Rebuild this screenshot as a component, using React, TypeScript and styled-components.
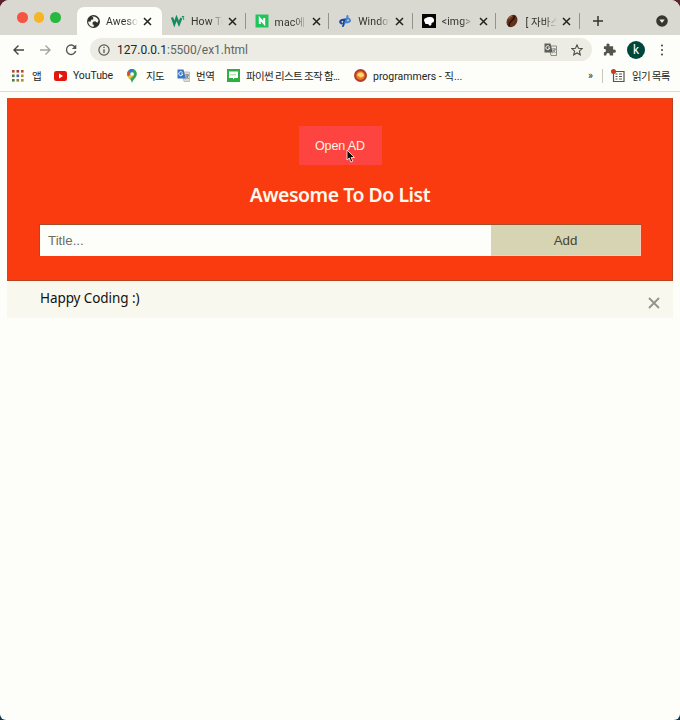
import React from 'react';
import styled, { createGlobalStyle } from 'styled-components';

const Global = createGlobalStyle`
  * { box-sizing: border-box; }
  html, body { margin: 0; background: #4b1728; }
  html { background: linear-gradient(#5b2230 0 50%, #0d3550 50%); height: 720px; }
  body { background: transparent; font-family: Roboto, "Noto Sans CJK KR", sans-serif; overflow: hidden; }
  button, input { font: inherit; border: 0; padding: 0; margin: 0; background: none; }
`;

const Window = styled.div`
  width: 680px; height: 720px; background: #fdfdf9; overflow: hidden;
  border-radius: 9px 9px 6px 6px; display: flex; flex-direction: column;
`;

const TabStrip = styled.div`
  height: 35px; background: #d9d9d1; display: flex; align-items: flex-end; flex: none;
`;
const Lights = styled.div`
  width: 77px; height: 35px; padding-left: 17px; display: flex; gap: 6px; align-items: center;
`;
const Light = styled.i<{ $color: string }>`
  width: 10.5px; height: 10.5px; border-radius: 50%; background: ${p => p.$color};
`;
const Tab = styled.div<{ $active?: boolean }>`
  width: ${p => (p.$active ? 85 : 83.6)}px; height: 28px;
  display: flex; align-items: center; position: relative; flex: none;
  padding-left: ${p => (p.$active ? 10 : 9)}px;
  border-radius: 7px 7px 0 0; background: ${p => (p.$active ? '#fdfdf9' : 'transparent')};
  font-size: 10.5px; color: #33342f;
  svg { flex: none; }
  &::after {
    content: ''; position: absolute; right: 0; top: 6px; height: 16px;
    border-right: ${p => (p.$active ? 0 : 1)}px solid #93938c;
  }
`;
const TabTitle = styled.span`
  width: 32px; margin-left: 6px; overflow: hidden; white-space: nowrap; letter-spacing: .1px;
  mask-image: linear-gradient(90deg, #000 62%, transparent 100%);
`;
const CloseIcon = styled.svg`margin-left: 5px;`;
const Spacer = styled.span`flex: 1;`;
const StripButton = styled.button<{ $right?: boolean }>`
  display: grid; place-items: center; width: 20px; height: 28px;
  margin: ${p => (p.$right ? '0 8px 0 auto' : '0 0 0 8px')};
`;

const Toolbar = styled.div`
  height: 29px; display: flex; align-items: center; padding: 0 9px 0 12px; flex: none;
`;
const NavButton = styled.button`width: 26px; height: 26px; text-align: left; display: flex; align-items: center;`;
const AddressBar = styled.div`
  width: 502px; height: 23px; border-radius: 12px; background: #ecece4;
  display: flex; align-items: center; padding: 0 9px 0 8px; color: #252622; font-size: 12px;
`;
const Url = styled.span`margin-left: 7px; flex: 1; letter-spacing: 0; font-size: 12px; span { color: #62645e; }`;
const AddressAction = styled.span`display: flex; margin-left: 14px;`;
const PuzzleIcon = styled.svg`margin-left: 11px; flex: none;`;
const Avatar = styled.div`
  width: 18px; height: 18px; border-radius: 50%; background: #00463a; color: #fff;
  display: grid; place-items: center; font-size: 12px; line-height: 16px; margin: 0 auto 0 11px;
`;
const MenuIcon = styled.svg`margin-right: 7px;`;

const Bookmarks = styled.div`
  height: 28px; flex: none; border-bottom: 1px solid #dedece; display: flex;
  align-items: center; padding: 0 12px 4px 12px; font-size: 10.5px; color: #252622; white-space: nowrap;
`;
const Bookmark = styled.div<{ $width: number; $gap?: number; $tracking?: number }>`
  width: ${p => p.$width}px; display: flex; align-items: center; gap: ${p => p.$gap ?? 6}px; flex: none;
  letter-spacing: ${p => p.$tracking ?? 0}px;
  svg { flex: none; }
`;
const BarDivider = styled.i`height: 14px; width: 1px; background: #c9c9bc; margin: 0 8px 0 9px;`;

const Page = styled.main`padding: 6px 7px 0;`;
const Header = styled.header`
  height: 183px; background: #fa3b0f; border: 1px solid #b8401f; border-left-color: #ee3d16; border-top-color: #df4b1e;
  padding: 27px 31.5px 0; display: flex; flex-direction: column; align-items: center; color: #fff;
`;
const AdButton = styled.button`
  width: 83px; height: 39px; background: #fd4440; color: #fff4e8;
  font: 12.5px "Liberation Sans", Arial, sans-serif; letter-spacing: -.1px;
`;
const Heading = styled.h2`
  margin: 15px 0; font: 600 19.4px/29px "Noto Sans", sans-serif; color: #fff9eb; letter-spacing: -.45px;
`;
const Form = styled.div`width: 602px; height: 32px; display: flex; border: 1px solid #a2502b; border-width: 1px 0 0 1px;`;
const TitleInput = styled.input`
  width: 451px; padding-left: 8px; background: #fdfdf9; font: 13.3px "Liberation Sans", Arial, sans-serif;
  outline: 0; &::placeholder { color: #6e6d62; opacity: 1; }
`;
const AddButton = styled.button`
  flex: 1; background: #d6d4b2; color: #47452f; border: 1px solid #f3cfb9; border-width: 0 1px 1px 0;
  font: 13.3px "Liberation Sans", Arial, sans-serif;
`;
const TodoRow = styled.div`
  height: 37px; background: #f8f8ef; display: flex; align-items: center; justify-content: space-between;
  padding: 0 13px 0 33px; font: 13.5px "Noto Sans", sans-serif; color: #11120e;
  span { margin-top: -4px; letter-spacing: -.08px; }
  svg { margin-top: 7px; }
`;
const Pointer = styled.svg`position: absolute; left: 346px; top: 149px;`;

const TabClose = () => (
  <CloseIcon width="9" height="9" viewBox="0 0 9 9"><path d="M1 1l7 7M8 1L1 8" stroke="#22231f" strokeWidth="1.5" /></CloseIcon>
);
const Globe = () => (
  <svg width="13" height="13" viewBox="1 1 22 22"><circle cx="12" cy="12" r="11" fill="#2f312b" />
    <path d="M3 12l5 .5 2.500 2V17l2 .5V21C7 21 3 17 3 12zM9 4c5-1.500 10.500 2 11.500 6.500l-2 3.500-3.500-2.500-3.500 1-1.500 2.500-3-2.500 1-3.500 3.500-.5V5z" fill="#f6f6ea" /></svg>
);
const W3 = () => (
  <svg width="14" height="14" viewBox="0 0 14 14" fill="none" stroke="#168b62"><path d="M1 3.500L3.300 10l2.200-6 2.500 6 2.300-6" strokeWidth="2.300" /><path d="M10.800 2.500h2L11.800 4q1.500.3.800 1.800" strokeWidth="1" /></svg>
);
const Naver = () => (
  <svg width="14" height="14" viewBox="0 0 14 14"><path fill="#1fc45b" d="M.5.5h13v13H.5z" /><path d="M4.800 10V4.500L9.200 9.500V4" fill="none" stroke="#fff" strokeWidth="2" /></svg>
);
const Swirl = () => (
  <svg width="14" height="14" viewBox="0 0 14 14" fill="none" strokeLinecap="round"><path d="M3.500 9.500Q.5 7.500 4 6l3-.5-1.500 4M5 12l1-2.500" stroke="#19469b" strokeWidth="2" /><path d="M10.500 4.500q3 2 0 3.500l-3 .5L9 4.500M9.500 2L9 4.500" stroke="#4983d0" strokeWidth="2" /></svg>
);
const BlackLogo = () => (
  <svg width="14" height="14" viewBox="0 0 14 14"><path d="M0 0h14v14H0z" fill="#050505" /><path d="M2 6.500q-.2-2.500 2-2.500 2-1.500 4-1 3.500-.5 4 2.500.5 3-2.500 3.500v1.500L8 12 6 10H3.500z" fill="#fff" /></svg>
);
const Bean = () => (
  <svg width="14" height="14" viewBox="0 0 14 14"><ellipse cx="7" cy="7" rx="5" ry="6.500" fill="#63301a" transform="rotate(32 7 7)" /><path d="M10 1.500Q9 5.500 6.500 7T4 12.500" fill="none" stroke="#250e06" strokeWidth="1.300" /><path d="M3.500 5Q5 2.500 7 2" stroke="#b0714e" fill="none" /></svg>
);
const Arrow = ({ forward = false }: { forward?: boolean }) => (
  <svg width="14" height="14" viewBox="0 0 14 14" fill="none" stroke={forward ? '#a3a49c' : '#44463f'} strokeWidth="1.400">
    <path d={forward ? 'M2 7h10M7.500 2.500L12 7l-4.500 4.500' : 'M12 7H2M6.500 2.500L2 7l4.500 4.500'} />
  </svg>
);
const Translate = ({ blue = false }: { blue?: boolean }) => (
  <svg width="13" height="13" viewBox="0 0 13 13"><path d="M5 3h7.500v9.500H7z" fill={blue ? '#d7ddd9' : '#eeeee1'} stroke={blue ? '#afb8b6' : '#73756b'} strokeWidth=".8" />
    <path d="M.5.5h6l2.300 9H.5z" fill={blue ? '#3976c7' : '#5b5e57'} /><path d="M5.500 3.600A2 2 0 105.800 5H4" fill="none" stroke="#fff" /><path d="M8 6h4M10 5v1M11.300 6Q11 8.500 8.500 10M9 7l2.500 3" fill="none" stroke="#6b716d" strokeWidth=".8" /></svg>
);
const AppsGrid = () => (
  <svg width="12" height="12" viewBox="0 0 12 12">
    {['#b94a31', '#a63d29', '#b94a31', '#4b7f43', '#42699a', '#b99026', '#467f42', '#8d8430', '#b08c25'].map((color, i) => (
      <rect key={i} x={(i % 3) * 4.500} y={Math.floor(i / 3) * 4.500} width="2.600" height="2.600" fill={color} />
    ))}
  </svg>
);
const MapPin = () => (
  <svg width="10" height="14" viewBox="0 0 10 14"><path d="M5 0a4.800 4.800 0 014.800 5C9.800 8.500 6.500 9.500 5 14 4.300 9.500.2 8.500.2 5A4.800 4.800 0 015 0z" fill="#33a457" /><path d="M1 2.200A4.800 4.800 0 017 .5L3 6.500z" fill="#387bd1" /><path d="M.9 2.300L4 4.800.8 7.500Q-.5 4.500.9 2.300z" fill="#dd4b37" /><path d="M.8 7.500l6-4 .2 3-4.500 4z" fill="#f3be2f" /><circle cx="5" cy="4.900" r="1.700" fill="#fff" /></svg>
);

const tabs = [
  { title: 'How To', icon: <W3 /> },
  { title: 'mac에서', icon: <Naver /> },
  { title: 'Window', icon: <Swirl /> },
  { title: '<img>', icon: <BlackLogo /> },
  { title: '[ 자바스', icon: <Bean /> },
];

export default function App() {
  return (
    <>
      <Global />
      <Window>
        <TabStrip>
          <Lights><Light $color="#f65443" /><Light $color="#f5b526" /><Light $color="#27b93e" /></Lights>
          <Tab $active><Globe /><TabTitle>Aweso</TabTitle><TabClose /></Tab>
          {tabs.map(tab => <Tab key={tab.title}>{tab.icon}<TabTitle>{tab.title}</TabTitle><TabClose /></Tab>)}
          <StripButton aria-label="New tab"><svg width="10" height="10" viewBox="0 0 10 10"><path d="M5 0v10M0 5h10" stroke="#31332c" strokeWidth="1.500" /></svg></StripButton>
          <StripButton $right aria-label="Search tabs"><svg width="12" height="12" viewBox="0 0 12 12"><circle cx="6" cy="6" r="5.800" fill="#363830" /><path d="M3.300 4.500h5.400L6 8z" fill="#eeeede" /></svg></StripButton>
        </TabStrip>
        <Toolbar>
          <NavButton aria-label="Back"><Arrow /></NavButton>
          <NavButton aria-label="Forward"><Arrow forward /></NavButton>
          <NavButton aria-label="Reload"><svg width="14" height="14" viewBox="0 0 14 14"><path d="M11 4A4.700 4.700 0 1011.700 8" fill="none" stroke="#55574f" strokeWidth="1.400" /><path d="M12.300 1.500v4.500H7.800z" fill="#55574f" /></svg></NavButton>
          <AddressBar>
            <svg width="12" height="12" viewBox="0 0 12 12"><circle cx="6" cy="6" r="5.100" fill="none" stroke="#55574f" strokeWidth="1.200" /><path d="M6 5.200v3.700M6 2.800v1.300" stroke="#55574f" strokeWidth="1.300" /></svg>
            <Url>127.0.0.1<span>:5500/ex1.html</span></Url>
            <AddressAction><Translate /></AddressAction>
            <AddressAction><svg width="12" height="12" viewBox="0 0 12 12"><path d="M6 .9l1.500 3.400 3.700.3-2.800 2.500.9 3.700L6 8.900l-3.300 1.900.9-3.700L.8 4.600l3.700-.3z" fill="none" stroke="#4f5149" strokeWidth="1.100" /></svg></AddressAction>
          </AddressBar>
          <PuzzleIcon width="13" height="14" viewBox="0 0 13 14"><path d="M1 3h3Q3 0 5.400 0T7 3h4v3.800Q14 6 14 8.300T11 10v3H7.500q0-2.600-2-2.600T3.500 13H1V9.500q2.200 0 2.200-2T1 6z" transform="translate(0 .5) scale(.92)" fill="#53554c" /></PuzzleIcon>
          <Avatar>k</Avatar>
          <MenuIcon width="4" height="14" viewBox="0 0 4 14" fill="#50524a"><circle cx="2" cy="2.500" r="1.100" /><circle cx="2" cy="7" r="1.100" /><circle cx="2" cy="11.500" r="1.100" /></MenuIcon>
        </Toolbar>
        <Bookmarks>
          <Bookmark $width={42} $gap={8} $tracking={-0.4}><AppsGrid />앱</Bookmark>
          <Bookmark $width={73} $tracking={-0.1}><svg width="13" height="10" viewBox="0 0 13 10"><rect width="13" height="10" rx="2.300" fill="#e1160c" /><path d="M5 2.500v5L9 5z" fill="#fff" /></svg>YouTube</Bookmark>
          <Bookmark $width={50} $gap={9} $tracking={-0.6}><MapPin />지도</Bookmark>
          <Bookmark $width={50} $tracking={-0.5}><Translate blue />번역</Bookmark>
          <Bookmark $width={127} $tracking={-0.65}><svg width="13" height="13" viewBox="0 0 13 13"><path fill="#2fae43" d="M0 0h13v13H0z" /><path fill="#fff" d="M2 2.500h9v6.500H7.500L6 10.500V9H2z" /><path d="M3.500 5.800h6" stroke="#2fae43" strokeDasharray="1" /></svg>파이썬 리스트 조작 함...</Bookmark>
          <Bookmark $width={110}><svg width="13" height="13" viewBox="0 0 13 13"><circle cx="6.500" cy="6.500" r="6.500" fill="#b63d25" /><circle cx="6.500" cy="6.500" r="4.300" fill="#e88028" /><path d="M3 6q1-3 4-2.500T10 7L6.500 8.500z" fill="#ffd76e" /></svg>programmers - 직...</Bookmark>
          <Spacer />»<BarDivider />
          <Bookmark $width={57} $gap={7} $tracking={-0.7}><svg width="14" height="14" viewBox="0 0 14 14"><path d="M2.500 2.500h10.500v10H2.500z" fill="none" stroke="#55574f" strokeWidth="1.200" /><path d="M4.500 5h2M8 5h3M4.500 7.500h2M8 7.500h3M4.500 10h2M8 10h3" stroke="#55574f" /><circle cx="2.500" cy="2.500" r="2.500" fill="#c33b21" /></svg>읽기 목록</Bookmark>
        </Bookmarks>
        <Page>
          <Header>
            <AdButton>Open AD</AdButton>
            <Heading>Awesome To Do List</Heading>
            <Form><TitleInput placeholder="Title..." aria-label="Title" /><AddButton>Add</AddButton></Form>
          </Header>
          <TodoRow><span>Happy Coding :)</span><svg width="12" height="12" viewBox="0 0 12 12"><path d="M1 1l10 10M11 1L1 11" stroke="#92938c" strokeWidth="1.800" /></svg></TodoRow>
        </Page>
        <Pointer width="9" height="14" viewBox="0 0 9 14"><path d="M1 1v10l2.300-2 1.500 4 2-.8-1.600-3.700H8.500z" fill="#100c0a" stroke="#fff" strokeWidth=".8" /></Pointer>
      </Window>
    </>
  );
}
